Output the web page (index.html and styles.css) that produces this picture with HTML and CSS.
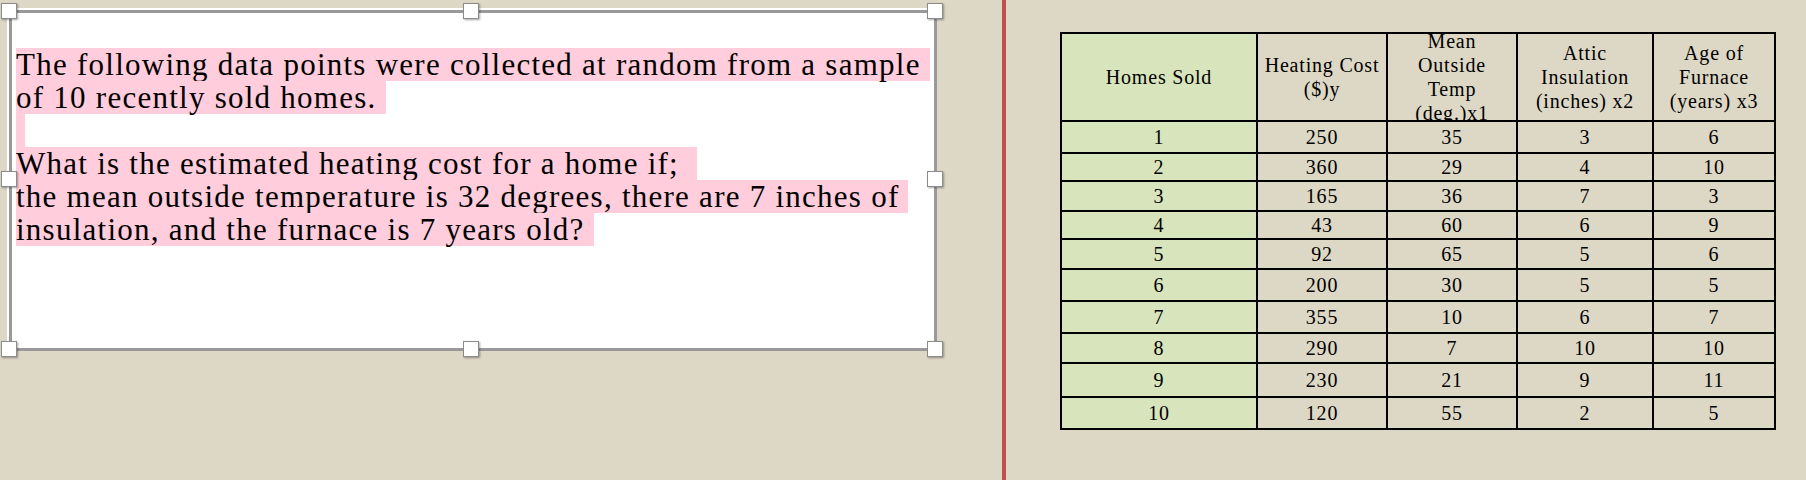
FILE: index.html
```html
<!DOCTYPE html>
<html lang="en">
<head>
<meta charset="utf-8">
<title>Heating cost data</title>
<link rel="stylesheet" href="styles.css">
</head>
<body>
<div class="screen">
  <div class="left-pane">
    <div class="frame">
      <div class="textbox">
        <div class="line"><span class="hl">The following data points were collected at random from a sample&nbsp;</span></div>
        <div class="line"><span class="hl">of 10 recently sold homes.&nbsp;</span></div>
        <div class="line"><span class="hl">&nbsp;</span></div>
        <div class="line"><span class="hl">What is the estimated heating cost for a home if;&nbsp;&nbsp;</span></div>
        <div class="line"><span class="hl">the mean outside temperature is 32 degrees, there are 7 inches of&nbsp;</span></div>
        <div class="line"><span class="hl">insulation, and the furnace is 7 years old?&nbsp;</span></div>
      </div>
      <span class="handle h-tl"></span>
      <span class="handle h-tm"></span>
      <span class="handle h-tr"></span>
      <span class="handle h-ml"></span>
      <span class="handle h-mr"></span>
      <span class="handle h-bl"></span>
      <span class="handle h-bm"></span>
      <span class="handle h-br"></span>
    </div>
  </div>
  <div class="divider"></div>
  <div class="right-pane">
    <div class="grid">
      <div class="cell key head">Homes Sold</div>
      <div class="cell head">Heating Cost<br>($)y</div>
      <div class="cell head clip">Mean<br>Outside<br>Temp<br>(deg.)x1</div>
      <div class="cell head">Attic<br>Insulation<br>(inches) x2</div>
      <div class="cell head">Age of<br>Furnace<br>(years) x3</div>

      <div class="cell key">1</div><div class="cell">250</div><div class="cell">35</div><div class="cell">3</div><div class="cell">6</div>
      <div class="cell key">2</div><div class="cell">360</div><div class="cell">29</div><div class="cell">4</div><div class="cell">10</div>
      <div class="cell key">3</div><div class="cell">165</div><div class="cell">36</div><div class="cell">7</div><div class="cell">3</div>
      <div class="cell key">4</div><div class="cell">43</div><div class="cell">60</div><div class="cell">6</div><div class="cell">9</div>
      <div class="cell key">5</div><div class="cell">92</div><div class="cell">65</div><div class="cell">5</div><div class="cell">6</div>
      <div class="cell key">6</div><div class="cell">200</div><div class="cell">30</div><div class="cell">5</div><div class="cell">5</div>
      <div class="cell key">7</div><div class="cell">355</div><div class="cell">10</div><div class="cell">6</div><div class="cell">7</div>
      <div class="cell key">8</div><div class="cell">290</div><div class="cell">7</div><div class="cell">10</div><div class="cell">10</div>
      <div class="cell key">9</div><div class="cell">230</div><div class="cell">21</div><div class="cell">9</div><div class="cell">11</div>
      <div class="cell key">10</div><div class="cell">120</div><div class="cell">55</div><div class="cell">2</div><div class="cell">5</div>
    </div>
  </div>
</div>
</body>
</html>
```

FILE: styles.css
```css
* { box-sizing: border-box; }

html, body {
  margin: 0;
  padding: 0;
}

body {
  background: #ddd8c5;
  font-family: "Liberation Serif", "DejaVu Serif", serif;
  color: #000;
}

.screen {
  display: flex;
  height: 480px;
  width: 1806px;
  overflow: hidden;
}

.left-pane {
  width: 1002px;
  flex: none;
}

.frame {
  position: relative;
  margin: 10px 0 0 9px;
  width: 928px;
  height: 341px;
  border: 3px solid #999999;
  background: #ffffff;
  box-shadow: -2px -2px 0 #ffffff;
}

.textbox {
  padding: 35px 0 0 4px;
  font-size: 31px;
  letter-spacing: 1.25px;
}

.line {
  height: 33px;
  white-space: nowrap;
}

.hl {
  display: inline-block;
  height: 33px;
  line-height: 33px;
  background: #ffcddb;
  vertical-align: top;
}

.handle {
  position: absolute;
  width: 16px;
  height: 16px;
  background: #ffffff;
  border: 1px solid #8c8c8c;
  box-shadow: 1px 1px 2px rgba(0, 0, 0, 0.35);
}

.h-tl { left: -11px; top: -10px; }
.h-tm { left: 451px; top: -10px; }
.h-tr { left: 915px; top: -10px; }
.h-ml { left: -11px; top: 158px; }
.h-mr { left: 915px; top: 158px; }
.h-bl { left: -11px; top: 328px; }
.h-bm { left: 451px; top: 328px; }
.h-br { left: 915px; top: 328px; }

.divider {
  width: 4px;
  flex: none;
  background: #c0504d;
}

.right-pane {
  flex: 1;
  padding: 32px 0 0 54px;
}

.grid {
  display: grid;
  grid-template-columns: 196px 130px 130px 136px 122px;
  grid-template-rows: 88px 32px 28px 30px 28px 30px 32px 32px 30px 34px 32px;
  width: 716px;
  border-left: 2px solid #000;
  border-top: 2px solid #000;
  font-size: 20px;
  letter-spacing: 0.8px;
  line-height: 24px;
}

.cell {
  display: flex;
  align-items: center;
  justify-content: center;
  text-align: center;
  border-right: 2px solid #000;
  border-bottom: 2px solid #000;
  min-height: 0;
}

.key {
  background: #d8e4bc;
}

.clip {
  overflow: hidden;
}
```
